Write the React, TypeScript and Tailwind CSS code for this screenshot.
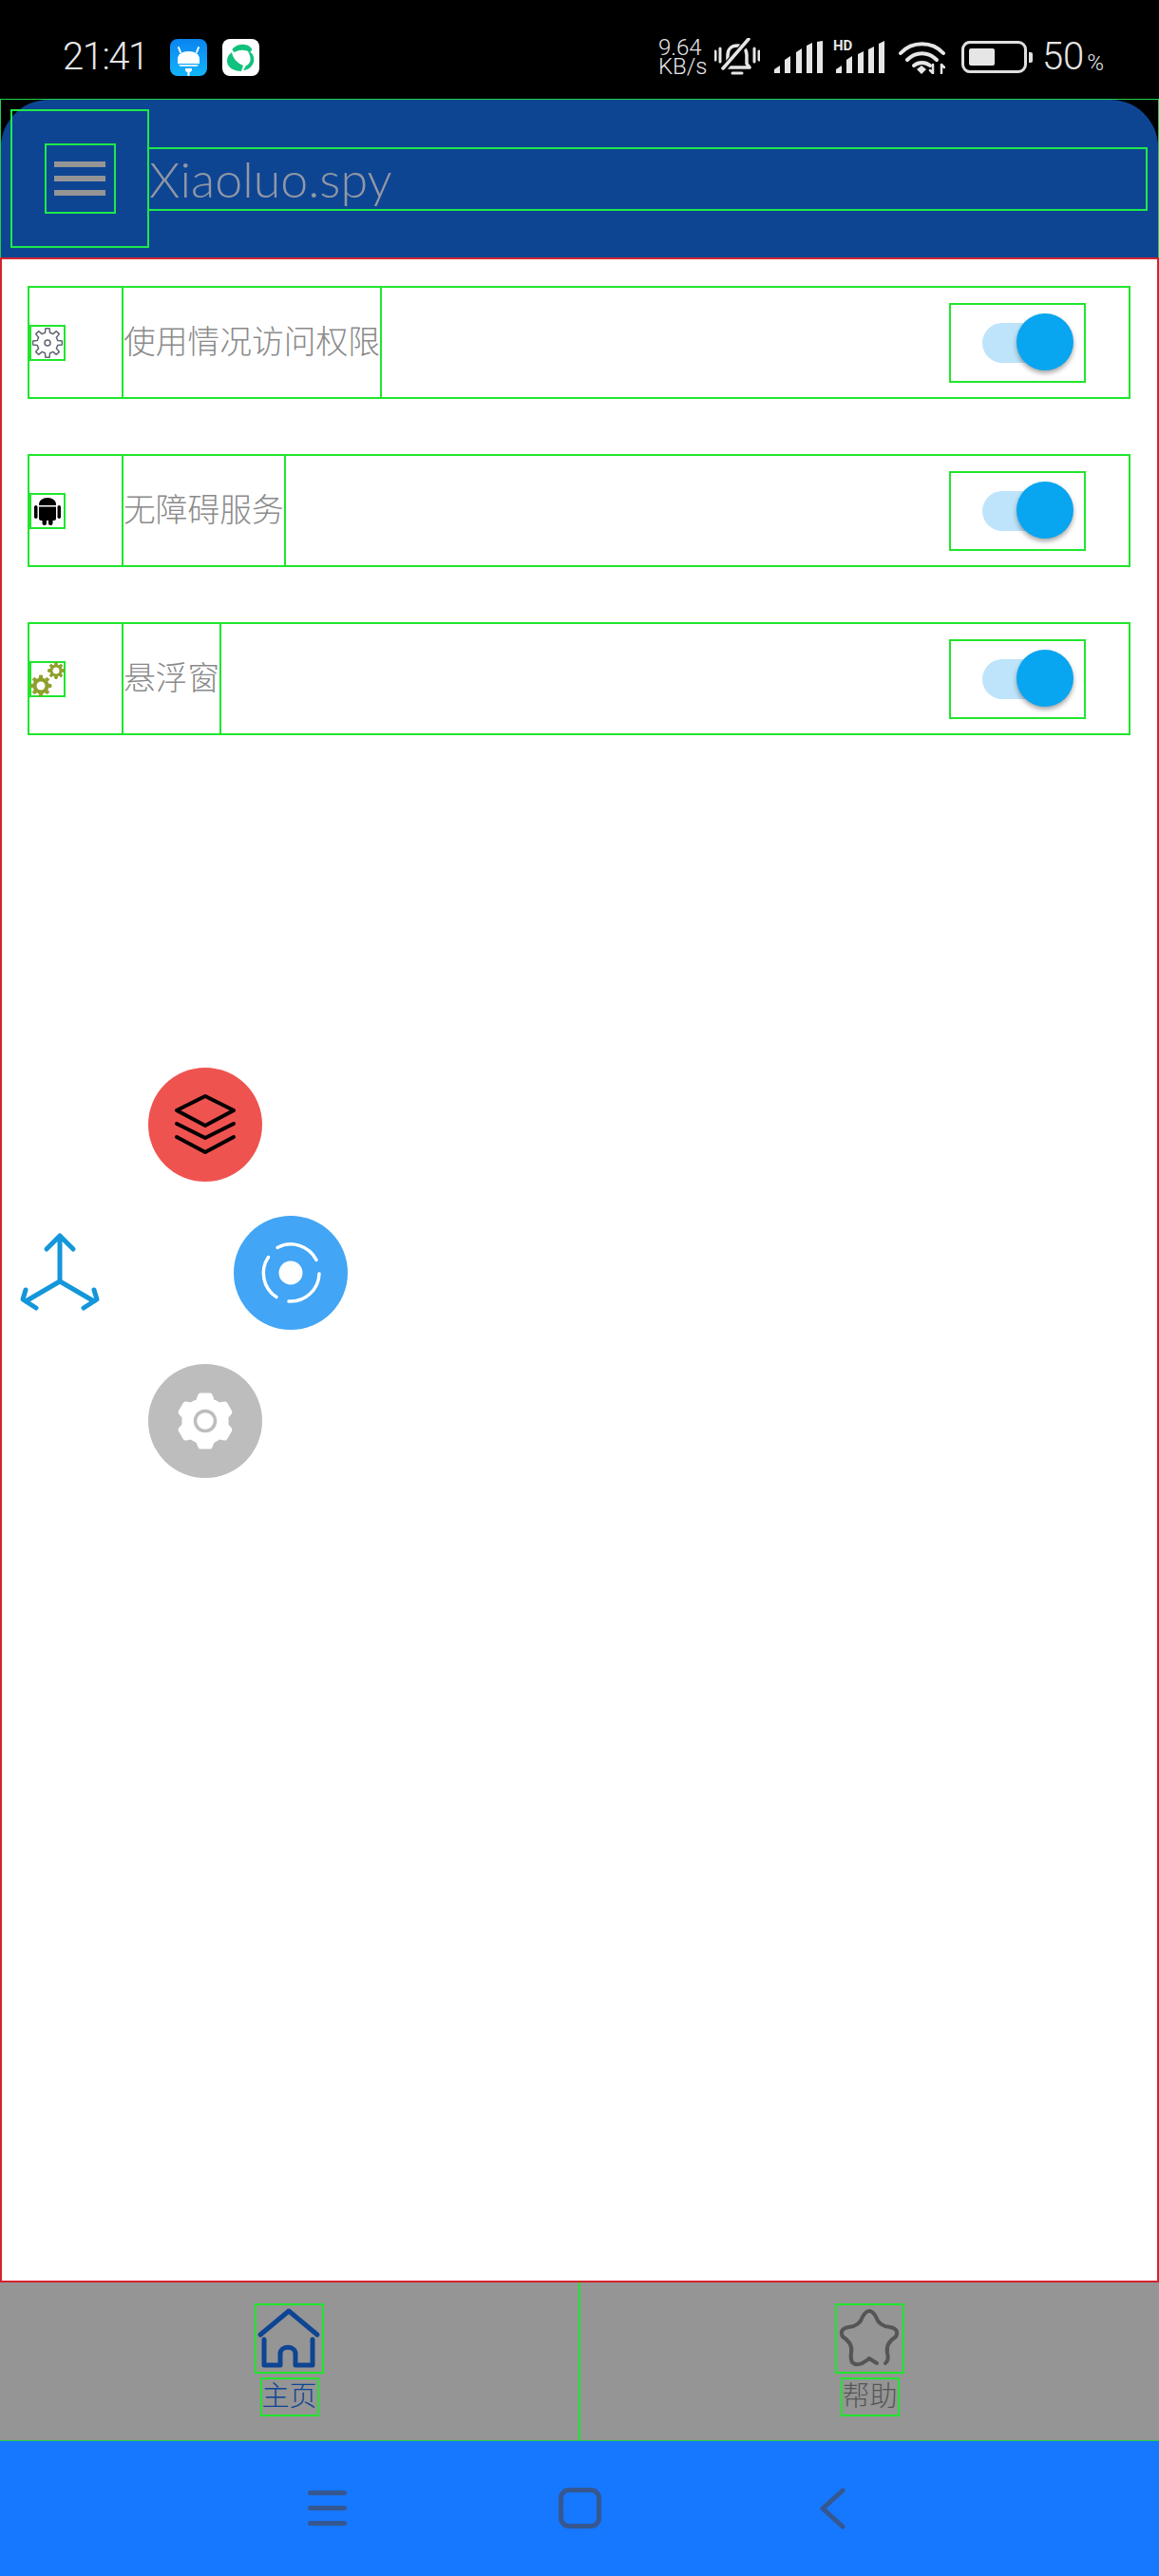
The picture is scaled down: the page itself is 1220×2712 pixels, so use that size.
import React from "react";

// builds a toothed wheel outline for the small gear icons
const gearPath = (cx: number, cy: number, ro: number, ri: number, teeth: number) => {
  const step = (Math.PI * 2) / teeth;
  const pts: string[] = [];
  for (let i = 0; i < teeth; i++) {
    const a = i * step - Math.PI / 2;
    const list: [number, number][] = [
      [ri, a - step * 0.3],
      [ro, a - step * 0.17],
      [ro, a + step * 0.17],
      [ri, a + step * 0.3],
    ];
    list.forEach(([r, t]) => {
      pts.push(`${(cx + r * Math.cos(t)).toFixed(2)} ${(cy + r * Math.sin(t)).toFixed(2)}`);
    });
  }
  return `M${pts.join("L")}Z`;
};

const GearOutline = () => (
  <svg width="34" height="34" viewBox="0 0 34 34" fill="none">
    <path d={gearPath(17, 17, 15.5, 11, 8)} stroke="#5f6672" strokeWidth="1.5" strokeLinejoin="round" />
    <circle cx="17" cy="17" r="3" stroke="#5f6672" strokeWidth="1.5" />
  </svg>
);

const AndroidIcon = () => (
  <svg width="34" height="34" viewBox="0 0 34 34" fill="#000">
    <path d="M8 10c0-4 4-7 9-7s9 3 9 7v1H8z" />
    <path d="M8 12.500h18V25c0 1-1 2-2 2H10c-1 0-2-1-2-2z" />
    <rect x="3" y="11" width="3.500" height="14" rx="1.750" />
    <rect x="27.500" y="11" width="3.500" height="14" rx="1.750" />
    <rect x="11.500" y="24" width="4.500" height="8" rx="2" />
    <rect x="18" y="24" width="4.500" height="8" rx="2" />
  </svg>
);

const GearsOlive = () => (
  <svg width="34" height="34" viewBox="0 0 34 34" fill="none" className="overflow-visible">
    <path d={gearPath(10, 24, 11, 8, 8)} fill="#8f9f2a" stroke="#8f9f2a" strokeLinejoin="round" />
    <circle cx="10" cy="24" r="4.500" fill="#fff" />
    <path d={gearPath(26, 8, 8.5, 6, 8)} fill="#8f9f2a" stroke="#8f9f2a" strokeLinejoin="round" />
    <circle cx="26" cy="8" r="3.500" fill="#fff" />
  </svg>
);

const rows = [
  { label: "使用情况访问权限", icon: <GearOutline /> },
  { label: "无障碍服务", icon: <AndroidIcon /> },
  { label: "悬浮窗", icon: <GearsOlive /> },
];

const StatusIcons = () => (
  <div className="ml-auto mr-[58px] flex items-center text-[#e6e6e6]">
    <div className="flex w-[47px] flex-col whitespace-nowrap text-[24px] font-light leading-[20px]">
      <span>9.64</span>
      <span>KB/s</span>
    </div>
    {/* muted bell */}
    <svg width="48" height="40" viewBox="0 0 48 40" fill="none" className="ml-[12px]">
      <path d="M11 31l3-4v-9c0-6 4-10 10-10s10 4 10 10v9l3 4z" stroke="#e6e6e6" strokeWidth="3.500" strokeLinejoin="round" />
      <path d="M9 33L37 1" stroke="#000" strokeWidth="7" />
      <path d="M9 32L36 1" stroke="#e6e6e6" strokeWidth="3.500" strokeLinecap="round" />
      <path d="M19 37h10M1 14v9M6 11v14M42 11v14M47 14v9" stroke="#e6e6e6" strokeWidth="3" strokeLinecap="round" />
    </svg>
    <svg width="51" height="34" viewBox="0 0 51 34" className="ml-[15px]" fill="#e6e6e6">
      <path d="M0 34v-4l6-4v8zM11 34V20l6-4v18zM23 34V12l6-4v26zM34 34V5l6-3v32zM45 34V1l6-1v34z" />
    </svg>
    <div className="relative ml-[14px]">
      <svg width="51" height="34" viewBox="0 0 51 34" fill="#e6e6e6">
        <path d="M0 34v-4l6-4v8zM11 34V20l6-4v18zM23 34V14l6-3v23zM34 34V9l6-3v28zM45 34V3l6-3v34z" />
      </svg>
      <span className="absolute left-[-3px] top-[-2px] text-[15px] font-bold leading-[15px]">HD</span>
    </div>
    <svg width="49" height="36" viewBox="0 0 49 36" fill="none" className="ml-[15px]">
      <path d="M2 14C14 1 35 1 47 14" stroke="#e6e6e6" strokeWidth="4" strokeLinecap="round" />
      <path d="M9 21c9-9 22-9 31 0" stroke="#e6e6e6" strokeWidth="4" strokeLinecap="round" />
      <path d="M16 27c5-4 12-4 17 0" stroke="#e6e6e6" strokeWidth="4" strokeLinecap="round" />
      <path d="M19 31l5-4 5 4-5 5z" fill="#e6e6e6" />
      <path d="M36 35v-9M33 32l3 3M45 35v-9M45 26l3 3" stroke="#e6e6e6" strokeWidth="2.500" strokeLinecap="round" />
    </svg>
    <div className="ml-[17px] flex items-center">
      <div className="h-[34px] w-[69px] rounded-[9px] border-[3px] border-[#e0e0e0] p-[5px]">
        <div className="h-full w-[27px] rounded-[2px] bg-[#e6e6e6]" />
      </div>
      <div className="ml-[2px] h-[11px] w-[4px] rounded-r-[2px] bg-[#e0e0e0]" />
    </div>
    <span className="ml-[10px] text-[40px] font-light leading-none">50</span>
    <span className="ml-[3px] mt-[12px] text-[24px] font-light leading-none">%</span>
  </div>
);

const Toggle = () => (
  <div className="relative mr-[45px] flex h-[84px] w-[144px] items-center border-2 border-[#1fe62c]">
    <div className="ml-[33px] h-[42px] w-[85px] rounded-full bg-[#bde4fa]" />
    <div className="absolute left-[69px] top-[9px] h-[60px] w-[60px] rounded-full bg-[#08a5f0] shadow-[0_3px_5px_rgba(0,0,0,0.35)]" />
  </div>
);

export default function App() {
  return (
    <div className="flex h-[2712px] w-full flex-col overflow-hidden bg-white font-['Roboto','Noto_Sans_CJK_SC',sans-serif]">
      <div className="flex h-[104px] shrink-0 items-center bg-black pl-[66px] pt-[16px] text-[#e6e6e6]">
        <span className="w-[91px] text-[40px] font-light leading-none tracking-[-1.5px]">21:41</span>
        <svg width="39" height="39" viewBox="0 0 39 39" className="ml-[22px]">
          <defs>
            <linearGradient id="appBlue" x1="0" y1="0" x2="0" y2="1">
              <stop offset="0" stopColor="#0a84f0" />
              <stop offset="1" stopColor="#12b4fb" />
            </linearGradient>
          </defs>
          <rect width="39" height="39" rx="8" fill="url(#appBlue)" />
          <path d="M8 26v-5c0-5 5-8 11.500-8S31 16 31 21v5z" fill="#fff" />
          <path d="M11 14L9 9M28 14l2-5" stroke="#fff" strokeWidth="2" strokeLinecap="round" />
          <path d="M9 27h21c-1 2-2 2-3 2H12c-1 0-2 0-3-2z" fill="#d8f0ff" />
          <path d="M16 31h7v2c0 1-2 2-2.500 2v4h-2v-4c-.5 0-2.500-1-2.500-2z" fill="#fff" />
        </svg>
        <svg width="39" height="39" viewBox="0 0 39 39" className="ml-[16px]" fill="none">
          <rect width="39" height="39" rx="8" fill="#fff" />
          <path d="M11 10c5-5 14-6 19-1 2 2 1 4-1 5-5-3-11-3-16 0-2-1-3-3-2-4z" fill="#10c27d" />
          <path d="M27 13c5 1 7 6 6 11-1 5-6 9-11 9l3-5c4-1 7-7 2-15z" fill="#10c27d" />
          <path d="M5 23c0-4 2-7 5-9 1 6 5 11 12 14l-2 6c-8 0-15-4-15-11z" fill="#10c27d" />
        </svg>
        <StatusIcons />
      </div>

      <header className="flex h-[167px] shrink-0 items-center border border-b-0 border-[#1fd14a] bg-black">
        <div className="flex h-full w-full items-center rounded-t-[50px] bg-[#0e4593] pl-[10px] pr-[11px]">
          <div className="flex h-[146px] w-[146px] shrink-0 items-center justify-center border-2 border-[#1de94a]">
            <div className="flex h-[74px] w-[75px] flex-col items-center justify-center gap-[9px] border-2 border-[#1de94a]">
              <div className="h-[6px] w-[54px] bg-[#959595]" />
              <div className="h-[6px] w-[54px] bg-[#959595]" />
              <div className="h-[6px] w-[54px] bg-[#959595]" />
            </div>
          </div>
          <div className="flex h-[67px] flex-1 items-center border-2 border-l-0 border-[#1de94a]">
            <span className="font-['Lato',sans-serif] text-[52px] font-light leading-none text-[#9298a5]">Xiaoluo.spy</span>
          </div>
        </div>
      </header>

      <main className="relative flex flex-1 flex-col gap-[58px] border-2 border-[#d3232f] pl-[27px] pr-[28px] pt-[28px]">
        {rows.map((row) => (
          <div key={row.label} className="flex h-[119px] items-center border-2 border-[#1fe62c]">
            <div className="flex h-full w-[99px] shrink-0 items-center border-r-2 border-[#1fe62c]">
              <div className="flex h-[38px] w-[38px] items-center justify-center border-2 border-[#1fe62c]">{row.icon}</div>
            </div>
            <div className="flex h-full items-center border-r-2 border-[#1fe62c]">
              <span className="text-[33.75px] font-light leading-none text-[#8a8a8a]">{row.label}</span>
            </div>
            <div className="flex-1" />
            <Toggle />
          </div>
        ))}

        {/* floating menu */}
        <svg width="90" height="92" viewBox="0 0 90 92" fill="none" className="absolute left-[16px] top-[1023px]">
          <path
            d="M45 53V5M31 19L45 5l14 14M45 53L9 74M45 53l36 21M9 62l-3 10 14 9M81 62l3 10-14 9"
            stroke="#1496da"
            strokeWidth="5"
            strokeLinecap="round"
            strokeLinejoin="round"
          />
        </svg>
        <div className="absolute left-[154px] top-[851px] h-[120px] w-[120px] rounded-full bg-[#ef5350]">
          <svg width="120" height="120" viewBox="0 0 120 120" fill="none">
            <path
              d="M60 30l30 15-30 16-30-16zM30 59l30 15 30-15M30 73l30 16 30-16"
              stroke="#000"
              strokeWidth="4"
              strokeLinecap="round"
              strokeLinejoin="round"
            />
          </svg>
        </div>
        <div className="absolute left-[244px] top-[1007px] h-[120px] w-[120px] rounded-full bg-[#42a5f5]">
          <svg width="120" height="120" viewBox="0 0 120 120" fill="none">
            <circle cx="60" cy="60" r="12.500" fill="#fff" />
            <path
              d="M46 33.500A30 30 0 0 1 87 46.500M90 61A30 30 0 0 1 58 90M36.500 43.500A30 30 0 0 0 45 85.500"
              stroke="#fff"
              strokeWidth="3.500"
              strokeLinecap="round"
            />
          </svg>
        </div>
        <div className="absolute left-[154px] top-[1163px] h-[120px] w-[120px] rounded-full bg-[#bdbdbd]">
          <svg width="120" height="120" viewBox="0 0 120 120" fill="none">
            <path d={gearPath(60, 60, 27, 22, 6)} fill="#fff" stroke="#fff" strokeWidth="6" strokeLinejoin="round" />
            <circle cx="60" cy="60" r="10.500" stroke="#bdbdbd" strokeWidth="3.500" />
          </svg>
        </div>
      </main>

      <nav className="flex h-[167px] shrink-0 border-b border-[#1fd14a] bg-[#959595]">
        <div className="flex flex-1 flex-col items-center border-r-2 border-[#1fe62c] pt-[22px]">
          <div className="h-[74px] w-[73px] border-2 border-[#1fe62c]">
            <svg width="69" height="70" viewBox="0 0 69 70" fill="none">
              <path
                d="M4 31L34 6l30 25M8 36v27h17V51c0-9 16-9 16 0v12h18V36"
                stroke="#0e4593"
                strokeWidth="5"
                strokeLinecap="round"
                strokeLinejoin="round"
              />
            </svg>
          </div>
          <div className="mt-[4px] flex h-[41px] w-[62px] items-center justify-center border-2 border-[#1fe62c]">
            <span className="whitespace-nowrap text-[29px] font-light leading-none text-[#0e4593]">主页</span>
          </div>
        </div>
        <div className="flex flex-1 flex-col items-center pt-[22px]">
          <div className="h-[74px] w-[73px] border-2 border-[#1fe62c]">
            <svg width="69" height="70" viewBox="0 0 69 70" fill="none">
              <path
                d="M34 56Q22 66 16 60Q14 56 15 50Q17 40 6 33Q2 25 12 23Q24 22 27 12Q34 0 41 12Q44 22 56 23Q66 25 62 33Q51 40 53 50Q55 58 51 61"
                stroke="#555"
                strokeWidth="4"
                strokeLinecap="round"
                strokeLinejoin="round"
              />
              <path d="M34 56l8 5" stroke="#555" strokeWidth="4" strokeLinecap="round" />
            </svg>
          </div>
          <div className="mt-[4px] flex h-[41px] w-[62px] items-center justify-center border-2 border-[#1fe62c]">
            <span className="whitespace-nowrap text-[29px] font-light leading-none text-[#555]">帮助</span>
          </div>
        </div>
      </nav>

      <div className="flex h-[142px] shrink-0 items-center bg-[#1677ff] pb-[1px] pl-[324px]">
        <div className="flex w-[41px] flex-col gap-[11px]">
          <div className="h-[5px] rounded-full bg-[#36578f]" />
          <div className="h-[5px] rounded-full bg-[#36578f]" />
          <div className="h-[5px] rounded-full bg-[#36578f]" />
        </div>
        <div className="ml-[223px] h-[43px] w-[45px] rounded-[11px] border-[5px] border-[#36578f]" />
        <svg width="28" height="44" viewBox="0 0 28 44" fill="none" className="ml-[229px]">
          <path d="M25 3L4 22l21 19" stroke="#36578f" strokeWidth="5" strokeLinecap="round" strokeLinejoin="round" />
        </svg>
      </div>
    </div>
  );
}
